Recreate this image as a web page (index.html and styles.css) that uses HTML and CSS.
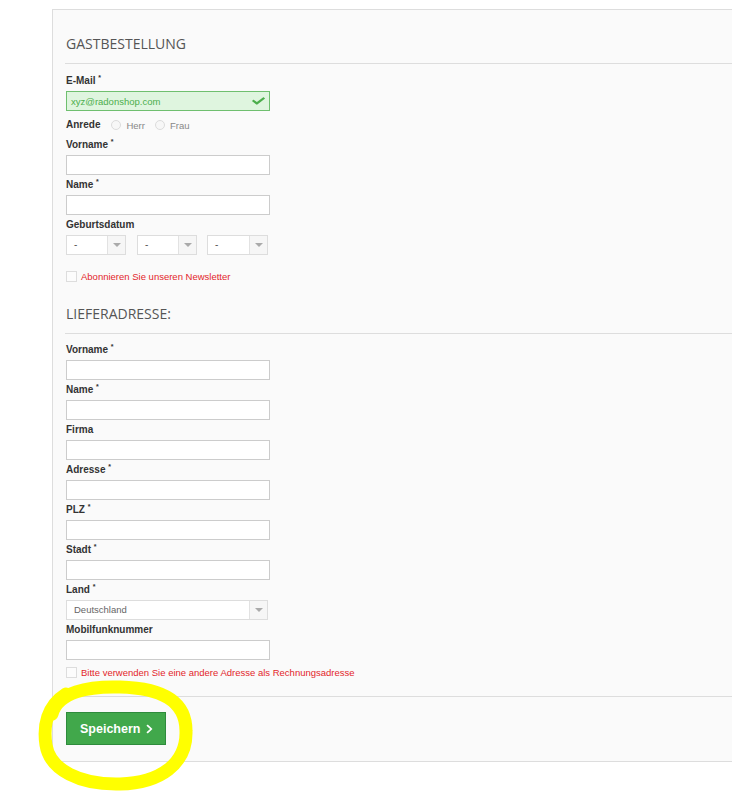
FILE: index.html
```html
<!DOCTYPE html>
<html lang="de">
<head>
<meta charset="utf-8">
<title>Gastbestellung</title>
<link rel="stylesheet" href="styles.css">
</head>
<body>
<div class="panel">
  <section class="section section-first">
    <h2 class="heading">Gastbestellung</h2>
    <div class="rule"></div>
    <div class="field">
      <div class="label">E-Mail <span class="req">*</span></div>
      <div class="input input-valid">
        <span class="value">xyz@radonshop.com</span>
        <svg class="check" viewBox="0 0 512 512" width="13" height="10" preserveAspectRatio="none"><path d="M173.9 439.4l-166.4-166.4c-10-10-10-26.2 0-36.2l36.2-36.2c10-10 26.2-10 36.2 0L192 312.7 432.1 72.6c10-10 26.2-10 36.2 0l36.2 36.2c10 10 10 26.2 0 36.2l-294.4 294.4c-10 10-26.2 10-36.2 0z" fill="#4cae4c"/></svg>
      </div>
    </div>
    <div class="radio-row">
      <span class="label label-inline">Anrede</span>
      <span class="radio"></span><span class="radio-text">Herr</span>
      <span class="radio radio-second"></span><span class="radio-text">Frau</span>
    </div>
    <div class="field">
      <div class="label">Vorname <span class="req">*</span></div>
      <div class="input"></div>
    </div>
    <div class="field">
      <div class="label">Name <span class="req">*</span></div>
      <div class="input"></div>
    </div>
    <div class="field">
      <div class="label">Geburtsdatum</div>
      <div class="selects">
        <div class="select select-small"><span class="select-value">-</span><span class="select-arrow"><span class="tri"></span></span></div>
        <div class="select select-small select-mid"><span class="select-value">-</span><span class="select-arrow"><span class="tri"></span></span></div>
        <div class="select select-small select-last"><span class="select-value">-</span><span class="select-arrow"><span class="tri"></span></span></div>
      </div>
    </div>
    <div class="check-row">
      <span class="checkbox"></span><span class="check-text">Abonnieren Sie unseren Newsletter</span>
    </div>
  </section>

  <section class="section section-second">
    <h2 class="heading">Lieferadresse:</h2>
    <div class="rule rule-tight"></div>
    <div class="field"><div class="label">Vorname <span class="req">*</span></div><div class="input"></div></div>
    <div class="field"><div class="label">Name <span class="req">*</span></div><div class="input"></div></div>
    <div class="field"><div class="label">Firma</div><div class="input"></div></div>
    <div class="field"><div class="label">Adresse <span class="req">*</span></div><div class="input"></div></div>
    <div class="field"><div class="label">PLZ <span class="req">*</span></div><div class="input"></div></div>
    <div class="field"><div class="label">Stadt <span class="req">*</span></div><div class="input"></div></div>
    <div class="field">
      <div class="label">Land <span class="req">*</span></div>
      <div class="select select-wide"><span class="select-value select-value-text">Deutschland</span><span class="select-arrow"><span class="tri"></span></span></div>
    </div>
    <div class="field"><div class="label">Mobilfunknummer</div><div class="input"></div></div>
    <div class="check-row check-row-last">
      <span class="checkbox"></span><span class="check-text">Bitte verwenden Sie eine andere Adresse als Rechnungsadresse</span>
    </div>
  </section>

  <div class="rule rule-footer"></div>
  <div class="actions">
    <button class="btn" type="button">Speichern
      <svg class="chev" viewBox="0 0 320 512" width="7" height="10" preserveAspectRatio="none"><path d="M285.5 273L91.1 467.3c-9.4 9.4-24.6 9.4-33.9 0l-22.7-22.7c-9.4-9.4-9.4-24.5 0-33.9L188.5 256 34.5 101.3c-9.3-9.4-9.3-24.5 0-33.9l22.7-22.7c9.4-9.4 24.6-9.4 33.9 0L285.5 239c9.4 9.4 9.4 24.6 0 34z" fill="#ffffff"/></svg>
    </button>
  </div>
</div>

<svg class="marker" viewBox="0 0 732 794" width="732" height="794">
  <path d="M52 714 C58 692, 88 686, 120 687 C160 688, 186 700, 186 731 C187 764, 160 783, 120 784 C80 785, 50 770, 46 745 C43 726, 47 706, 66 694" fill="none" stroke="#ffff00" stroke-width="13" stroke-linecap="round" stroke-linejoin="round"/>
</svg>
</body>
</html>
```

FILE: styles.css
```css
html, body {
  margin: 0;
  padding: 0;
  overflow: hidden;
  background: #ffffff;
}

body {
  font-family: "Liberation Sans", Arial, sans-serif;
  color: #333333;
  position: relative;
  width: 732px;
  height: 794px;
}

.panel {
  margin: 9px 0 0 52px;
  border: 1px solid #dddddd;
  border-right: none;
  background: #fafafa;
  padding: 0 0 16px 13px;
}

.section-first {
  padding-top: 24px;
}

.section-second {
  padding-top: 20px;
}

.heading {
  margin: 0;
  font-family: "Open Sans", "Liberation Sans", sans-serif;
  font-weight: 400;
  font-size: 14px;
  line-height: 20px;
  color: #555555;
  text-transform: uppercase;
  letter-spacing: 0;
}

.rule {
  height: 1px;
  background: #dddddd;
  margin: 9px 0 11px -1px;
}

.rule-tight {
  margin-bottom: 10px;
}

.rule-footer {
  margin: 16px 0 0 -1px;
}

.field {
  margin-bottom: 4px;
}

.label {
  font-size: 10px;
  line-height: 12px;
  height: 12px;
  font-weight: 700;
  color: #333333;
  margin-bottom: 4px;
  white-space: nowrap;
}

.req {
  font-size: 7px;
  vertical-align: top;
  line-height: 7px;
  position: relative;
  top: -1px;
}

.input {
  box-sizing: border-box;
  width: 204px;
  height: 20px;
  border: 1px solid #cccccc;
  background: #ffffff;
  display: flex;
  align-items: center;
}

.input-valid {
  background: #dff5df;
  border-color: #6fbf6f;
  padding: 0 4px 0 4px;
  justify-content: space-between;
}

.value {
  font-size: 9.5px;
  color: #4cae4c;
}

.check {
  display: block;
}

.radio-row {
  height: 20px;
  display: flex;
  align-items: center;
  margin-bottom: 4px;
}

.label-inline {
  margin: 0 11px 0 0;
  display: inline-block;
}

.radio {
  box-sizing: border-box;
  width: 10px;
  height: 10px;
  border-radius: 50%;
  border: 1px solid #dcdcdc;
  background: #f7f7f7;
  margin-right: 5px;
}

.radio-second {
  margin-left: 10px;
}

.radio-text {
  font-size: 9.5px;
  color: #888888;
}

.selects {
  display: flex;
}

.select {
  box-sizing: border-box;
  height: 20px;
  border: 1px solid #dddddd;
  background: #ffffff;
  display: flex;
  align-items: stretch;
}

.select-small {
  width: 60px;
}

.select-mid {
  margin-left: 11px;
}

.select-last {
  margin-left: 10px;
  width: 61px;
}

.select-wide {
  width: 202px;
}

.select-value {
  flex: 1;
  font-size: 10px;
  color: #555555;
  padding-left: 7px;
  line-height: 18px;
}

.select-value-text {
  font-size: 9.5px;
  color: #666666;
}

.select-arrow {
  width: 17px;
  border-left: 1px solid #e2e2e2;
  background: #f6f6f6;
  display: flex;
  align-items: center;
  justify-content: center;
}

.tri {
  width: 0;
  height: 0;
  border-left: 4px solid transparent;
  border-right: 4px solid transparent;
  border-top: 4px solid #aaaaaa;
}

.check-row {
  display: flex;
  align-items: center;
  height: 16px;
  margin-top: 13px;
}

.check-row-last {
  margin-top: 4px;
}

.checkbox {
  box-sizing: border-box;
  width: 11px;
  height: 11px;
  border: 1px solid #dddddd;
  background: #fcfcfc;
  margin-right: 4px;
}

.check-text {
  font-size: 9.5px;
  color: #e3262b;
  white-space: nowrap;
}

.actions {
  padding-top: 15px;
}

.btn {
  box-sizing: border-box;
  width: 100px;
  height: 33px;
  border: 1px solid #2e8b3c;
  background: #41a84b;
  color: #ffffff;
  font-family: "Liberation Sans", Arial, sans-serif;
  font-weight: 700;
  font-size: 12.5px;
  padding: 0 0 0 13px;
  margin: 0;
  display: flex;
  align-items: center;
  text-align: left;
  cursor: pointer;
}

.chev {
  margin-left: 6px;
  display: block;
}

.marker {
  position: absolute;
  left: 0;
  top: 0;
  pointer-events: none;
}
```
